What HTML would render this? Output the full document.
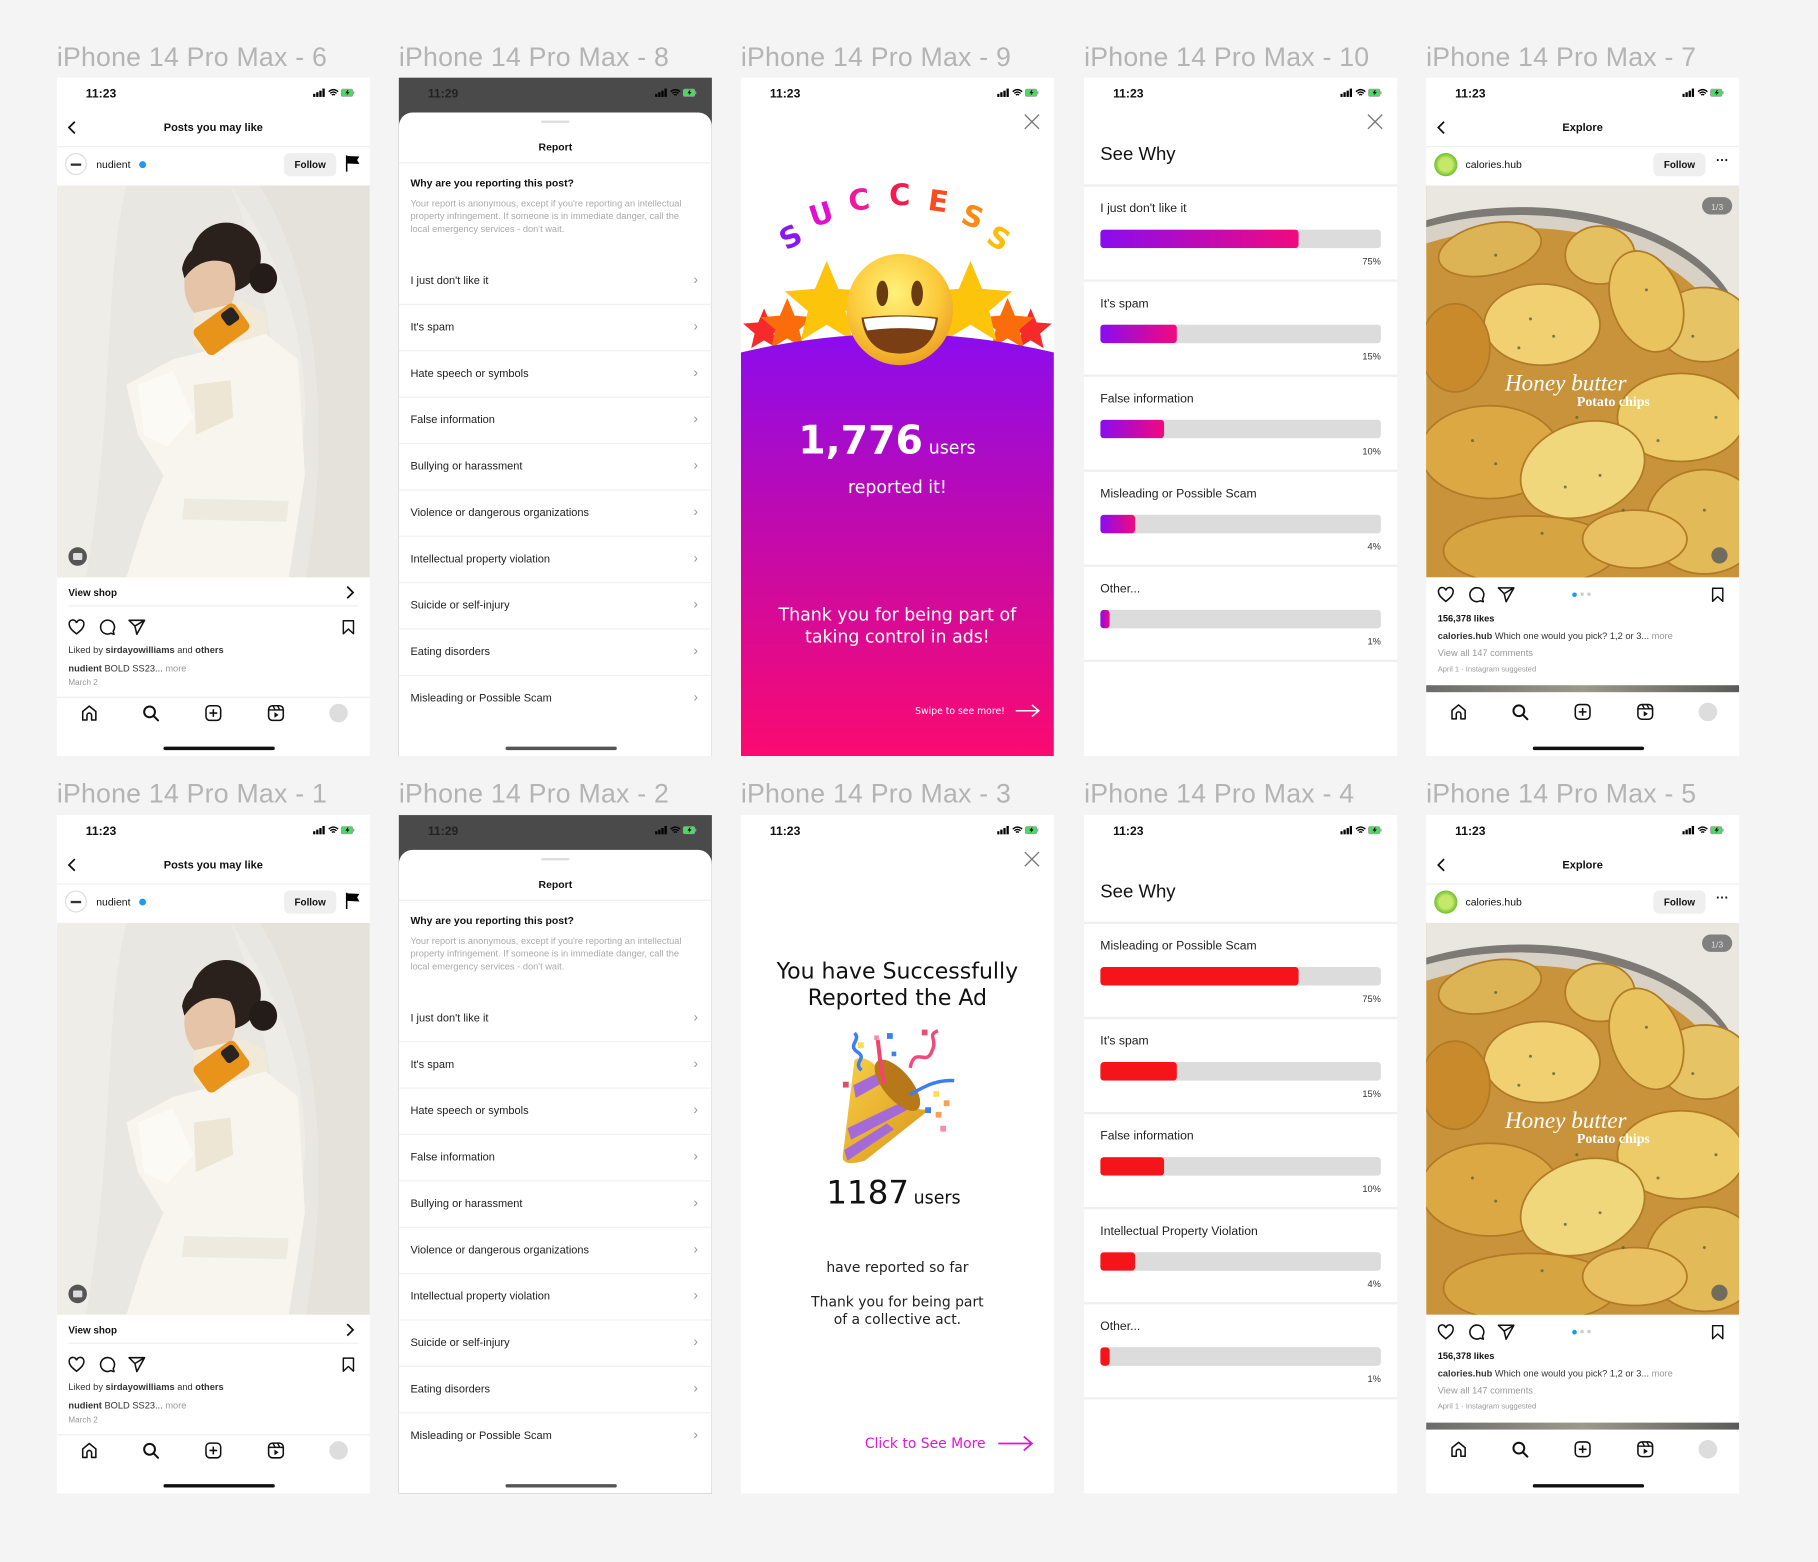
<!DOCTYPE html>
<html><head><meta charset="utf-8">
<style>
*{margin:0;padding:0;box-sizing:border-box}
html,body{width:1818px;height:1562px;overflow:hidden;background:#f4f4f4}
body{font-family:"Liberation Sans",Arial,sans-serif;color:#111}
#w{position:absolute;left:0;top:0;width:1568px;height:1347px;transform:scale(1.15944);transform-origin:0 0}
.lbl{position:absolute;font-size:23px;color:#b4b4b4;white-space:nowrap;letter-spacing:.2px}
.ph{position:absolute;width:270px;height:585px;background:#fff;overflow:hidden}
.a{position:absolute;white-space:nowrap}
.st{left:25px;top:8px;font-size:10.5px;font-weight:bold}
.sti{right:13px;top:8px}
.hb{position:absolute;left:92px;width:96px;height:3px;border-radius:2px;background:#111;top:577px}
.hl{position:absolute;left:0;right:0;height:1px;background:#efefef}
.b9{font-size:9px;font-weight:bold}
.t8{font-size:8px}
.fol{position:absolute;left:196px;top:65px;width:45px;height:20px;border-radius:5px;background:#efefef;font-size:8.5px;font-weight:bold;text-align:center;line-height:20px}
.item{position:absolute;left:10px;font-size:9.5px;color:#222}
.chev{position:absolute;right:12px;font-size:12px;color:#999}
.bar{position:absolute;left:14px;width:242px;height:16px;border-radius:3px;background:#dcdcdc;overflow:hidden}
.bar i{position:absolute;left:0;top:0;bottom:0;border-radius:3px}
.g i{background:linear-gradient(90deg,#8a0cef,#f2097e)}
.r i{background:#f5141a}
.pl{position:absolute;left:14px;font-size:10.5px;color:#222}
.pc{position:absolute;right:14px;font-size:8px;color:#333}
.para{position:absolute;left:10px;top:103px;font-size:8px;line-height:11px;color:#aaa;white-space:normal;width:236px}
</style></head><body>
<svg width="0" height="0" style="position:absolute">
<defs>
<symbol id="sig" viewBox="0 0 40 10"><rect x="0" y="6" width="2.2" height="3" fill="#000"/><rect x="3" y="4.5" width="2.2" height="4.5" fill="#000"/><rect x="6" y="3" width="2.2" height="6" fill="#000"/><rect x="9" y="1" width="2.2" height="8" fill="#000"/><path d="M15 4 Q19.5 0 24 4 M16.5 5.6 Q19.5 3 22.5 5.6 M18 7.2 Q19.5 6 21 7.2" stroke="#000" stroke-width="1.3" fill="none"/><rect x="27" y="1.5" width="11" height="7" rx="1.5" fill="#4cd964" stroke="#999" stroke-width=".6"/><rect x="38.3" y="3.6" width="1.2" height="2.8" fill="#999"/><path d="M33 2.5 L31 5.5 L33 5.5 L32 7.8 L35 4.3 L33 4.3 L34 2.5Z" fill="#000"/></symbol>
<symbol id="heart" viewBox="0 0 24 24"><path d="M12 20.5 C5 15 2.5 12 2.5 8.3 A4.8 4.8 0 0 1 12 6.5 A4.8 4.8 0 0 1 21.5 8.3 C21.5 12 19 15 12 20.5Z" fill="none" stroke="#111" stroke-width="2"/></symbol>
<symbol id="cmt" viewBox="0 0 24 24"><path d="M20.5 17 A9 9 0 1 0 17.5 19.7 L21.5 21 Z" fill="none" stroke="#111" stroke-width="2" stroke-linejoin="round"/></symbol>
<symbol id="send" viewBox="0 0 24 24"><path d="M22 3 L2 3 L9.5 10.5 L12 21 Z M9.5 10.5 L22 3" fill="none" stroke="#111" stroke-width="2" stroke-linejoin="round"/></symbol>
<symbol id="bm" viewBox="0 0 24 24"><path d="M5 3 H19 V21 L12 14.5 L5 21 Z" fill="none" stroke="#111" stroke-width="2" stroke-linejoin="round"/></symbol>
<symbol id="home" viewBox="0 0 24 24"><path d="M3.5 10 L12 3 L20.5 10 V21 H15 V15 A3 3 0 0 0 9 15 V21 H3.5 Z" fill="none" stroke="#111" stroke-width="2" stroke-linejoin="round"/></symbol>
<symbol id="srch" viewBox="0 0 24 24"><circle cx="10.5" cy="10.5" r="7" fill="none" stroke="#111" stroke-width="2.6"/><path d="M16 16 L21.5 21.5" stroke="#111" stroke-width="2.6" stroke-linecap="round"/></symbol>
<symbol id="plus" viewBox="0 0 24 24"><rect x="2.5" y="2.5" width="19" height="19" rx="5" fill="none" stroke="#111" stroke-width="2"/><path d="M12 7 V17 M7 12 H17" stroke="#111" stroke-width="2"/></symbol>
<symbol id="reel" viewBox="0 0 24 24"><rect x="2.5" y="2.5" width="19" height="19" rx="5" fill="none" stroke="#111" stroke-width="2"/><path d="M2.5 8 H21.5 M8 2.5 L11 8 M14 2.5 L17 8" stroke="#111" stroke-width="1.8"/><path d="M10 11 L15.5 14.5 L10 18 Z" fill="#111"/></symbol>
<symbol id="chl" viewBox="0 0 12 16"><path d="M9 2 L3 8 L9 14" fill="none" stroke="#111" stroke-width="1.8"/></symbol>
<symbol id="chr" viewBox="0 0 12 16"><path d="M3 2 L9 8 L3 14" fill="none" stroke="#111" stroke-width="1.8"/></symbol>
<symbol id="x" viewBox="0 0 16 16"><path d="M1 1 L15 15 M15 1 L1 15" stroke="#777" stroke-width="1.3"/></symbol>
<path id="star" d="M0,-1 L.265,-.364 L.951,-.309 L.428,.139 L.588,.809 L0,.45 L-.588,.809 L-.428,.139 L-.951,-.309 L-.265,-.364Z"/>
<symbol id="woman" viewBox="0 0 270 338">
<rect width="270" height="338" fill="#e9e7e1"/>
<path d="M0 0 H60 C40 80 50 200 25 338 H0Z" fill="#efede8"/>
<path d="M175 0 H270 V338 H215 C235 220 230 90 175 0Z" fill="#e4e2db"/>
<path d="M150 0 C190 60 215 120 214 200 L200 338 H180 C200 220 190 100 150 0Z" fill="#eeece6"/>
<ellipse cx="146" cy="62" rx="30" ry="30" fill="#2a211d"/>
<ellipse cx="178" cy="80" rx="12" ry="13" fill="#241c18"/>
<ellipse cx="132" cy="86" rx="22" ry="30" fill="#e6c4a8"/>
<path d="M108 72 C112 45 150 40 168 62 L162 78 C150 62 125 58 110 80Z" fill="#2a211d"/>
<path d="M118 110 L160 100 L180 110 L182 134 L140 152 L118 137Z" fill="#f1ead9"/>
<path d="M60 172 L100 150 L140 140 L180 128 L208 150 L214 250 L200 338 H60 L75 290 L92 250 L70 215Z" fill="#f7f5ee"/>
<path d="M70 172 L100 160 L118 200 L95 225 L75 215Z" fill="#fbfaf5"/>
<path d="M118 172 L150 168 L152 200 L120 215Z" fill="#ede6d4"/>
<path d="M110 270 L200 272 L198 290 L108 288Z" fill="#eeeae0"/>
<g transform="translate(142,124) rotate(-36)"><rect x="-22" y="-14" width="44" height="28" rx="5" fill="#e8941a"/><rect x="6" y="-11" width="13" height="13" rx="3" fill="#2a2420"/></g>
<circle cx="18" cy="320" r="8" fill="#555"/><rect x="14" y="317" width="8" height="6" rx="1" fill="#ddd"/>
</symbol>
<symbol id="chips" viewBox="0 0 270 338">
<rect width="270" height="338" fill="#c8933a"/>
<path d="M0 0 H270 V120 C240 40 120 0 0 40Z" fill="#eae7e1"/>
<path d="M0 30 C100 0 240 30 270 110 V140 C230 50 110 15 0 50Z" fill="#d8d2c6"/>
<path d="M0 30 C100 0 240 30 270 110 L270 116 C235 36 100 8 0 36Z" fill="#7d7a75"/>
<g stroke="#b07a26" stroke-width="1.5">
<ellipse cx="55" cy="55" rx="45" ry="22" fill="#dcb456" transform="rotate(-12 55 55)"/>
<ellipse cx="150" cy="60" rx="30" ry="25" fill="#e4c060"/>
<ellipse cx="240" cy="120" rx="40" ry="32" fill="#e6c466"/>
<ellipse cx="100" cy="120" rx="50" ry="35" fill="#f0d070"/>
<ellipse cx="190" cy="100" rx="30" ry="45" fill="#e9c45e" transform="rotate(-20 190 100)"/>
<ellipse cx="25" cy="140" rx="30" ry="38" fill="#c98a2c"/>
<ellipse cx="220" cy="200" rx="55" ry="38" fill="#eccb68"/>
<ellipse cx="55" cy="230" rx="60" ry="40" fill="#dca843"/>
<ellipse cx="135" cy="245" rx="55" ry="40" fill="#f1d77c" transform="rotate(-20 135 245)"/>
<ellipse cx="240" cy="290" rx="50" ry="45" fill="#e2bb58"/>
<ellipse cx="90" cy="315" rx="75" ry="30" fill="#d7a442"/>
<ellipse cx="180" cy="305" rx="45" ry="25" fill="#e8c062"/>
</g>
<g fill="#5d6535" opacity=".8"><circle cx="90" cy="115" r="1.3"/><circle cx="110" cy="130" r="1.3"/><circle cx="80" cy="140" r="1.3"/><circle cx="130" cy="200" r="1.3"/><circle cx="200" cy="220" r="1.3"/><circle cx="60" cy="240" r="1.3"/><circle cx="40" cy="220" r="1.3"/><circle cx="230" cy="130" r="1.3"/><circle cx="170" cy="280" r="1.3"/><circle cx="150" cy="250" r="1.3"/><circle cx="240" cy="280" r="1.3"/><circle cx="250" cy="200" r="1.3"/><circle cx="100" cy="300" r="1.3"/><circle cx="60" cy="60" r="1.3"/><circle cx="190" cy="90" r="1.3"/><circle cx="120" cy="260" r="1.3"/></g>
<text x="68" y="177" font-family="Liberation Serif" font-style="italic" font-size="20" fill="#fff">Honey butter</text>
<text x="130" y="190" font-family="Liberation Serif" font-weight="bold" font-size="12" fill="#fff">Potato chips</text>
<rect x="238" y="10" width="26" height="15" rx="7.5" fill="#6d6d6d" opacity=".85"/>
<text x="251" y="21" font-size="7.5" fill="#ddd" text-anchor="middle" font-family="Liberation Sans">1/3</text>
<circle cx="253" cy="319" r="7" fill="#5e5e5e" opacity=".85"/>
</symbol>
</defs></svg>
<div id="w">

<div class="lbl" style="left:49px;top:36px">iPhone 14 Pro Max - 6</div>
<div class="lbl" style="left:344px;top:36px">iPhone 14 Pro Max - 8</div>
<div class="lbl" style="left:639px;top:36px">iPhone 14 Pro Max - 9</div>
<div class="lbl" style="left:935px;top:36px">iPhone 14 Pro Max - 10</div>
<div class="lbl" style="left:1230px;top:36px">iPhone 14 Pro Max - 7</div>
<div class="lbl" style="left:49px;top:671px">iPhone 14 Pro Max - 1</div>
<div class="lbl" style="left:344px;top:671px">iPhone 14 Pro Max - 2</div>
<div class="lbl" style="left:639px;top:671px">iPhone 14 Pro Max - 3</div>
<div class="lbl" style="left:935px;top:671px">iPhone 14 Pro Max - 4</div>
<div class="lbl" style="left:1230px;top:671px">iPhone 14 Pro Max - 5</div>

<!-- Posts (6) -->
<div class="ph" style="left:49px;top:67px">
<div class="a st">11:23</div><svg class="a sti" width="36" height="10"><use href="#sig"/></svg>
<svg class="a" style="left:8px;top:36px" width="10" height="14"><use href="#chl"/></svg>
<div class="a b9" style="left:0;width:270px;text-align:center;top:38px;font-size:9.5px">Posts you may like</div>
<div class="hl" style="top:59px"></div>
<div class="a" style="left:7px;top:65px;width:19px;height:19px;border-radius:50%;border:1px solid #ddd;background:#fff"><div style="margin:8px 4px;height:2px;background:#333"></div></div>
<div class="a" style="left:34px;top:70px;font-size:9px">nudient</div>
<div class="a" style="left:71px;top:72px;width:6px;height:6px;border-radius:50%;background:#1d9bf0"></div>
<div class="fol">Follow</div>
<svg class="a" style="left:248px;top:66px" width="14" height="16"><path d="M2 1 V15" stroke="#000" stroke-width="1.3"/><path d="M2.5 1.5 L13 2 L11 5 L13 8.5 L2.5 8Z" fill="#000"/></svg>
<svg class="a" style="left:0;top:93px" width="270" height="338"><use href="#woman"/></svg>
<div class="a b9" style="left:10px;top:439px;font-size:8.5px">View shop</div>
<svg class="a" style="left:248px;top:437px" width="10" height="14"><use href="#chr"/></svg>
<div class="hl" style="left:10px;right:10px;top:455px"></div>
<svg class="a" style="left:9px;top:466px" width="16" height="16"><use href="#heart"/></svg>
<svg class="a" style="left:35px;top:466px" width="16" height="16"><use href="#cmt"/></svg>
<svg class="a" style="left:61px;top:466px" width="16" height="16"><use href="#send"/></svg>
<svg class="a" style="left:244px;top:466px" width="15" height="16"><use href="#bm"/></svg>
<div class="a t8" style="left:10px;top:489px;color:#333">Liked by <b>sirdayowilliams</b> and <b>others</b></div>
<div class="a t8" style="left:10px;top:505px;color:#333"><b>nudient</b> BOLD SS23... <span style="color:#999">more</span></div>
<div class="a" style="left:10px;top:519px;font-size:7px;color:#999">March 2</div>
<div class="hl" style="top:534px"></div>
<svg class="a" style="left:20px;top:540px" width="16" height="16"><use href="#home"/></svg>
<svg class="a" style="left:73px;top:540px" width="16" height="16"><use href="#srch"/></svg>
<svg class="a" style="left:127px;top:540px" width="16" height="16"><use href="#plus"/></svg>
<svg class="a" style="left:181px;top:540px" width="16" height="16"><use href="#reel"/></svg>
<div class="a" style="left:235px;top:540px;width:16px;height:16px;border-radius:50%;background:#ddd"></div>
<div class="hb"></div>
</div>

<!-- Posts (1) -->
<div class="ph" style="left:49px;top:703px">
<div class="a st">11:23</div><svg class="a sti" width="36" height="10"><use href="#sig"/></svg>
<svg class="a" style="left:8px;top:36px" width="10" height="14"><use href="#chl"/></svg>
<div class="a b9" style="left:0;width:270px;text-align:center;top:38px;font-size:9.5px">Posts you may like</div>
<div class="hl" style="top:59px"></div>
<div class="a" style="left:7px;top:65px;width:19px;height:19px;border-radius:50%;border:1px solid #ddd;background:#fff"><div style="margin:8px 4px;height:2px;background:#333"></div></div>
<div class="a" style="left:34px;top:70px;font-size:9px">nudient</div>
<div class="a" style="left:71px;top:72px;width:6px;height:6px;border-radius:50%;background:#1d9bf0"></div>
<div class="fol">Follow</div>
<svg class="a" style="left:248px;top:66px" width="14" height="16"><path d="M2 1 V15" stroke="#000" stroke-width="1.3"/><path d="M2.5 1.5 L13 2 L11 5 L13 8.5 L2.5 8Z" fill="#000"/></svg>
<svg class="a" style="left:0;top:93px" width="270" height="338"><use href="#woman"/></svg>
<div class="a b9" style="left:10px;top:439px;font-size:8.5px">View shop</div>
<svg class="a" style="left:248px;top:437px" width="10" height="14"><use href="#chr"/></svg>
<div class="hl" style="left:10px;right:10px;top:455px"></div>
<svg class="a" style="left:9px;top:466px" width="16" height="16"><use href="#heart"/></svg>
<svg class="a" style="left:35px;top:466px" width="16" height="16"><use href="#cmt"/></svg>
<svg class="a" style="left:61px;top:466px" width="16" height="16"><use href="#send"/></svg>
<svg class="a" style="left:244px;top:466px" width="15" height="16"><use href="#bm"/></svg>
<div class="a t8" style="left:10px;top:489px;color:#333">Liked by <b>sirdayowilliams</b> and <b>others</b></div>
<div class="a t8" style="left:10px;top:505px;color:#333"><b>nudient</b> BOLD SS23... <span style="color:#999">more</span></div>
<div class="a" style="left:10px;top:519px;font-size:7px;color:#999">March 2</div>
<div class="hl" style="top:534px"></div>
<svg class="a" style="left:20px;top:540px" width="16" height="16"><use href="#home"/></svg>
<svg class="a" style="left:73px;top:540px" width="16" height="16"><use href="#srch"/></svg>
<svg class="a" style="left:127px;top:540px" width="16" height="16"><use href="#plus"/></svg>
<svg class="a" style="left:181px;top:540px" width="16" height="16"><use href="#reel"/></svg>
<div class="a" style="left:235px;top:540px;width:16px;height:16px;border-radius:50%;background:#ddd"></div>
<div class="hb"></div>
</div>

<!-- Report (8) -->
<div class="ph" style="left:344px;top:67px;background:#4a4a4a">
<div class="a st" style="color:#222">11:29</div><svg class="a sti" width="36" height="10"><use href="#sig"/></svg>
<div class="a" style="left:0;top:30px;width:270px;height:555px;background:#fff;border-radius:12px 12px 0 0"></div>
<div class="a" style="left:123px;top:37px;width:24px;height:2px;background:#ddd"></div>
<div class="a b9" style="left:0;width:270px;text-align:center;top:55px">Report</div>
<div class="hl" style="top:73px"></div>
<div class="a b9" style="left:10px;top:86px">Why are you reporting this post?</div>
<div class="para">Your report is anonymous, except if you're reporting an intellectual property infringement. If someone is in immediate danger, call the local emergency services - don't wait.</div>
<div class="item" style="top:170px">I just don't like it</div><div class="chev" style="top:167px">›</div><div class="hl" style="top:195px"></div>
<div class="item" style="top:210px">It's spam</div><div class="chev" style="top:207px">›</div><div class="hl" style="top:235px"></div>
<div class="item" style="top:250px">Hate speech or symbols</div><div class="chev" style="top:247px">›</div><div class="hl" style="top:275px"></div>
<div class="item" style="top:290px">False information</div><div class="chev" style="top:287px">›</div><div class="hl" style="top:315px"></div>
<div class="item" style="top:330px">Bullying or harassment</div><div class="chev" style="top:327px">›</div><div class="hl" style="top:355px"></div>
<div class="item" style="top:370px">Violence or dangerous organizations</div><div class="chev" style="top:367px">›</div><div class="hl" style="top:395px"></div>
<div class="item" style="top:410px">Intellectual property violation</div><div class="chev" style="top:407px">›</div><div class="hl" style="top:435px"></div>
<div class="item" style="top:450px">Suicide or self-injury</div><div class="chev" style="top:447px">›</div><div class="hl" style="top:475px"></div>
<div class="item" style="top:490px">Eating disorders</div><div class="chev" style="top:487px">›</div><div class="hl" style="top:515px"></div>
<div class="item" style="top:530px">Misleading or Possible Scam</div><div class="chev" style="top:527px">›</div>
<div class="hb" style="background:#555"></div>
</div>

<!-- Report (2) -->
<div class="ph" style="left:344px;top:703px;background:#4a4a4a">
<div class="a st" style="color:#222">11:29</div><svg class="a sti" width="36" height="10"><use href="#sig"/></svg>
<div class="a" style="left:0;top:30px;width:270px;height:555px;background:#fff;border-radius:12px 12px 0 0"></div>
<div class="a" style="left:123px;top:37px;width:24px;height:2px;background:#ddd"></div>
<div class="a b9" style="left:0;width:270px;text-align:center;top:55px">Report</div>
<div class="hl" style="top:73px"></div>
<div class="a b9" style="left:10px;top:86px">Why are you reporting this post?</div>
<div class="para">Your report is anonymous, except if you're reporting an intellectual property infringement. If someone is in immediate danger, call the local emergency services - don't wait.</div>
<div class="item" style="top:170px">I just don't like it</div><div class="chev" style="top:167px">›</div><div class="hl" style="top:195px"></div>
<div class="item" style="top:210px">It's spam</div><div class="chev" style="top:207px">›</div><div class="hl" style="top:235px"></div>
<div class="item" style="top:250px">Hate speech or symbols</div><div class="chev" style="top:247px">›</div><div class="hl" style="top:275px"></div>
<div class="item" style="top:290px">False information</div><div class="chev" style="top:287px">›</div><div class="hl" style="top:315px"></div>
<div class="item" style="top:330px">Bullying or harassment</div><div class="chev" style="top:327px">›</div><div class="hl" style="top:355px"></div>
<div class="item" style="top:370px">Violence or dangerous organizations</div><div class="chev" style="top:367px">›</div><div class="hl" style="top:395px"></div>
<div class="item" style="top:410px">Intellectual property violation</div><div class="chev" style="top:407px">›</div><div class="hl" style="top:435px"></div>
<div class="item" style="top:450px">Suicide or self-injury</div><div class="chev" style="top:447px">›</div><div class="hl" style="top:475px"></div>
<div class="item" style="top:490px">Eating disorders</div><div class="chev" style="top:487px">›</div><div class="hl" style="top:515px"></div>
<div class="item" style="top:530px">Misleading or Possible Scam</div><div class="chev" style="top:527px">›</div>
<div class="hb" style="background:#555"></div>
</div>

<!-- Success (9) -->
<div class="ph" style="left:639px;top:67px">
<div class="a st">11:23</div><svg class="a sti" width="36" height="10"><use href="#sig"/></svg>
<svg class="a" style="left:244px;top:31px" width="14" height="14"><use href="#x"/></svg>
<svg class="a" style="left:0;top:0" width="270" height="585">
<defs><linearGradient id="pg" x1="0" y1="0" x2="0" y2="1"><stop offset="0" stop-color="#8b0cee"/><stop offset=".45" stop-color="#c00aae"/><stop offset="1" stop-color="#fb0a70"/></linearGradient></defs>
<g font-family="DejaVu Sans, Liberation Sans" font-weight="bold" font-size="25" text-anchor="middle">
<text x="47" y="145" fill="#8a16f2" transform="rotate(-28 47 145)">S</text>
<text x="72" y="126" fill="#e20fd2" transform="rotate(-18 72 126)">U</text>
<text x="103" y="114" fill="#f0189c" transform="rotate(-7 103 114)">C</text>
<text x="137" y="110" fill="#f51a50">C</text>
<text x="169" y="115" fill="#fa4c1e" transform="rotate(8 169 115)">E</text>
<text x="197" y="128" fill="#fa8a10" transform="rotate(20 197 128)">S</text>
<text x="218" y="146" fill="#fbbd0a" transform="rotate(30 218 146)">S</text>
</g>
<use href="#star" fill="#f62a2a" transform="translate(20,218) scale(19)"/>
<use href="#star" fill="#fa6c0c" transform="translate(40,214) scale(24)"/>
<use href="#star" fill="#fcc40a" transform="translate(74,196) scale(38)"/>
<use href="#star" fill="#f62a2a" transform="translate(250,218) scale(19)"/>
<use href="#star" fill="#fa6c0c" transform="translate(230,214) scale(24)"/>
<use href="#star" fill="#fcc40a" transform="translate(198,196) scale(38)"/>
<path d="M0 237 Q135 205 270 237 V585 H0Z" fill="url(#pg)"/>
<defs><radialGradient id="fy" cx=".45" cy=".35" r=".7"><stop offset="0" stop-color="#fff27a"/><stop offset=".6" stop-color="#fcc93a"/><stop offset="1" stop-color="#e89a20"/></radialGradient></defs>
<ellipse cx="137" cy="200" rx="46" ry="48" fill="url(#fy)"/>
<ellipse cx="122" cy="186" rx="5" ry="11" fill="#6a3a10"/>
<ellipse cx="152" cy="186" rx="5" ry="11" fill="#6a3a10"/>
<path d="M104 207 Q137 203 170 207 Q166 238 137 238 Q108 238 104 207Z" fill="#7a3e14"/>
<path d="M106 208 Q137 204 168 208 Q167 216 165 218 Q137 214 109 218 Q107 214 106 208Z" fill="#fff"/>
<text x="157" y="324" font-family="DejaVu Sans, Liberation Sans" font-weight="bold" font-size="34" fill="#fff" text-anchor="end">1,776</text>
<text x="162" y="324" font-family="DejaVu Sans, Liberation Sans" font-size="15" fill="#fff">users</text>
<text x="135" y="358" font-family="DejaVu Sans, Liberation Sans" font-size="15" fill="#fff" text-anchor="middle">reported it!</text>
<text x="135" y="468" font-family="DejaVu Sans, Liberation Sans" font-size="15" fill="#fff" text-anchor="middle">Thank you for being part of</text>
<text x="135" y="487" font-family="DejaVu Sans, Liberation Sans" font-size="15" fill="#fff" text-anchor="middle">taking control in ads!</text>
<text x="189" y="549" font-family="DejaVu Sans, Liberation Sans" font-size="8" fill="#fff" text-anchor="middle">Swipe to see more!</text>
<path d="M237 546 H256 M251 541 L257 546 L251 551" stroke="#fff" stroke-width="1.3" fill="none"/>
</svg>
</div>

<!-- Success (3) -->
<div class="ph" style="left:639px;top:703px">
<div class="a st">11:23</div><svg class="a sti" width="36" height="10"><use href="#sig"/></svg>
<svg class="a" style="left:244px;top:31px" width="14" height="14"><use href="#x"/></svg>
<svg class="a" style="left:0;top:0" width="270" height="585">
<g font-family="DejaVu Sans, Liberation Sans" text-anchor="middle" fill="#111">
<text x="135" y="141" font-size="19">You have Successfully</text>
<text x="135" y="164" font-size="19">Reported the Ad</text>
</g>
<g transform="translate(0,8)">
<defs><linearGradient id="cone" x1="0" y1="0" x2="1" y2="1"><stop offset="0" stop-color="#f7d046"/><stop offset="1" stop-color="#d9931a"/></linearGradient></defs>
<path d="M98 203 Q112 195 135 232 Q150 250 164 245 L107 290 Q86 296 88 285Z" fill="url(#cone)"/>
<path d="M92 262 L140 239 L146 245 L95 272Z M89 281 L126 258 L132 263 L92 290Z M97 225 L119 214 L124 222 L99 236Z" fill="#a46ad8"/>
<ellipse cx="135" cy="225" rx="12" ry="27" transform="rotate(-40 135 225)" fill="#b7781a"/>
<path d="M104 212 C96 205 110 202 100 196 C92 190 104 186 98 180" stroke="#3d7ef2" stroke-width="3" fill="none"/>
<path d="M124 224 C120 210 120 200 118 186" stroke="#f0456e" stroke-width="3.5" fill="none"/>
<path d="M146 233 C160 225 170 220 184 221" stroke="#3d7ef2" stroke-width="3" fill="none"/>
<path d="M146 210 C150 190 160 210 165 195 C170 185 160 182 170 178" stroke="#ef4a7c" stroke-width="3" fill="none"/>
<g><rect x="101" y="188" width="5" height="5" fill="#fbe04a"/><rect x="126" y="180" width="5" height="5" fill="#3d7ef2"/><rect x="130" y="196" width="4" height="4" fill="#3d7ef2"/><rect x="166" y="230" width="5" height="5" fill="#fbe04a"/><rect x="175" y="238" width="5" height="5" fill="#f7a05a"/><rect x="159" y="244" width="5" height="5" fill="#3d7ef2"/><rect x="168" y="248" width="5" height="5" fill="#f7a05a"/><rect x="172" y="260" width="5" height="5" fill="#f78ab0"/><rect x="88" y="222" width="5" height="5" fill="#e84a6a"/><rect x="156" y="177" width="5" height="5" fill="#ef4a7c"/><rect x="115" y="182" width="4" height="4" fill="#f78ab0"/></g>
</g>
<g font-family="DejaVu Sans, Liberation Sans" fill="#111">
<text x="145" y="335" font-size="28" text-anchor="end">1187</text>
<text x="149" y="335" font-size="15">users</text>
<text x="135" y="394" font-size="12" text-anchor="middle" fill="#222">have reported so far</text>
<text x="135" y="424" font-size="12" text-anchor="middle" fill="#222">Thank you for being part</text>
<text x="135" y="439" font-size="12" text-anchor="middle" fill="#222">of a collective act.</text>
<text x="159" y="546" font-size="12" text-anchor="middle" fill="#e215d8">Click to See More</text>
</g>
<path d="M222 542 H250 M244 536 L251 542 L244 548" stroke="#e215d8" stroke-width="1.5" fill="none"/>
</svg>
</div>

<!-- See Why (10) -->
<div class="ph" style="left:935px;top:67px">
<div class="a st">11:23</div><svg class="a sti" width="36" height="10"><use href="#sig"/></svg>
<svg class="a" style="left:244px;top:31px" width="14" height="14"><use href="#x"/></svg>
<div class="a" style="left:14px;top:58px;font-size:16px">See Why</div>
<div class="hl" style="top:92px;height:2px"></div>
<div class="pl" style="top:107px">I just don't like it</div><div class="bar g" style="top:131px"><i style="width:171px"></i></div><div class="pc" style="top:154px">75%</div><div class="hl" style="top:174px;height:2px"></div>
<div class="pl" style="top:189px">It's spam</div><div class="bar g" style="top:213px"><i style="width:66px"></i></div><div class="pc" style="top:236px">15%</div><div class="hl" style="top:256px;height:2px"></div>
<div class="pl" style="top:271px">False information</div><div class="bar g" style="top:295px"><i style="width:55px"></i></div><div class="pc" style="top:318px">10%</div><div class="hl" style="top:338px;height:2px"></div>
<div class="pl" style="top:353px">Misleading or Possible Scam</div><div class="bar g" style="top:377px"><i style="width:30px"></i></div><div class="pc" style="top:400px">4%</div><div class="hl" style="top:420px;height:2px"></div>
<div class="pl" style="top:435px">Other...</div><div class="bar g" style="top:459px"><i style="width:8px"></i></div><div class="pc" style="top:482px">1%</div><div class="hl" style="top:502px;height:2px"></div>
</div>

<!-- See Why (4) -->
<div class="ph" style="left:935px;top:703px">
<div class="a st">11:23</div><svg class="a sti" width="36" height="10"><use href="#sig"/></svg>
<div class="a" style="left:14px;top:58px;font-size:16px">See Why</div>
<div class="hl" style="top:92px;height:2px"></div>
<div class="pl" style="top:107px">Misleading or Possible Scam</div><div class="bar r" style="top:131px"><i style="width:171px"></i></div><div class="pc" style="top:154px">75%</div><div class="hl" style="top:174px;height:2px"></div>
<div class="pl" style="top:189px">It's spam</div><div class="bar r" style="top:213px"><i style="width:66px"></i></div><div class="pc" style="top:236px">15%</div><div class="hl" style="top:256px;height:2px"></div>
<div class="pl" style="top:271px">False information</div><div class="bar r" style="top:295px"><i style="width:55px"></i></div><div class="pc" style="top:318px">10%</div><div class="hl" style="top:338px;height:2px"></div>
<div class="pl" style="top:353px">Intellectual Property Violation</div><div class="bar r" style="top:377px"><i style="width:30px"></i></div><div class="pc" style="top:400px">4%</div><div class="hl" style="top:420px;height:2px"></div>
<div class="pl" style="top:435px">Other...</div><div class="bar r" style="top:459px"><i style="width:8px"></i></div><div class="pc" style="top:482px">1%</div><div class="hl" style="top:502px;height:2px"></div>
</div>

<!-- Explore (7) -->
<div class="ph" style="left:1230px;top:67px">
<div class="a st">11:23</div><svg class="a sti" width="36" height="10"><use href="#sig"/></svg>
<svg class="a" style="left:8px;top:36px" width="10" height="14"><use href="#chl"/></svg>
<div class="a b9" style="left:0;width:270px;text-align:center;top:38px;font-size:9.5px">Explore</div>
<div class="hl" style="top:59px"></div>
<div class="a" style="left:7px;top:65px;width:20px;height:20px;border-radius:50%;background:radial-gradient(circle,#c6e86a 40%,#6cc02a 70%)"></div>
<div class="a" style="left:34px;top:70px;font-size:9px">calories.hub</div>
<div class="fol">Follow</div>
<div class="a" style="left:250px;top:66px;font-size:11px;font-weight:bold">···</div>
<svg class="a" style="left:0;top:93px" width="270" height="338"><use href="#chips"/></svg>
<svg class="a" style="left:9px;top:438px" width="16" height="16"><use href="#heart"/></svg>
<svg class="a" style="left:35px;top:438px" width="16" height="16"><use href="#cmt"/></svg>
<svg class="a" style="left:61px;top:438px" width="16" height="16"><use href="#send"/></svg>
<div class="a" style="left:126px;top:444px;width:4px;height:4px;border-radius:50%;background:#1d9bf0"></div>
<div class="a" style="left:133px;top:444px;width:3px;height:3px;border-radius:50%;background:#ccc"></div>
<div class="a" style="left:139px;top:444px;width:3px;height:3px;border-radius:50%;background:#ccc"></div>
<svg class="a" style="left:244px;top:438px" width="15" height="16"><use href="#bm"/></svg>
<div class="a t8" style="left:10px;top:462px;font-weight:bold">156,378 likes</div>
<div class="a t8" style="left:10px;top:477px;color:#333"><b>calories.hub</b> Which one would you pick? 1,2 or 3... <span style="color:#999">more</span></div>
<div class="a t8" style="left:10px;top:492px;color:#999">View all 147 comments</div>
<div class="a" style="left:10px;top:507px;font-size:6.5px;color:#999">April 1 · Instagram suggested</div>
<div class="a" style="left:0;top:524px;width:270px;height:6px;background:linear-gradient(90deg,#6a6a6a,#9a9a8a,#5a5a5a)"></div>
<svg class="a" style="left:20px;top:539px" width="16" height="16"><use href="#home"/></svg>
<svg class="a" style="left:73px;top:539px" width="16" height="16"><use href="#srch"/></svg>
<svg class="a" style="left:127px;top:539px" width="16" height="16"><use href="#plus"/></svg>
<svg class="a" style="left:181px;top:539px" width="16" height="16"><use href="#reel"/></svg>
<div class="a" style="left:235px;top:539px;width:16px;height:16px;border-radius:50%;background:#ddd"></div>
<div class="hb"></div>
</div>

<!-- Explore (5) -->
<div class="ph" style="left:1230px;top:703px">
<div class="a st">11:23</div><svg class="a sti" width="36" height="10"><use href="#sig"/></svg>
<svg class="a" style="left:8px;top:36px" width="10" height="14"><use href="#chl"/></svg>
<div class="a b9" style="left:0;width:270px;text-align:center;top:38px;font-size:9.5px">Explore</div>
<div class="hl" style="top:59px"></div>
<div class="a" style="left:7px;top:65px;width:20px;height:20px;border-radius:50%;background:radial-gradient(circle,#c6e86a 40%,#6cc02a 70%)"></div>
<div class="a" style="left:34px;top:70px;font-size:9px">calories.hub</div>
<div class="fol">Follow</div>
<div class="a" style="left:250px;top:66px;font-size:11px;font-weight:bold">···</div>
<svg class="a" style="left:0;top:93px" width="270" height="338"><use href="#chips"/></svg>
<svg class="a" style="left:9px;top:438px" width="16" height="16"><use href="#heart"/></svg>
<svg class="a" style="left:35px;top:438px" width="16" height="16"><use href="#cmt"/></svg>
<svg class="a" style="left:61px;top:438px" width="16" height="16"><use href="#send"/></svg>
<div class="a" style="left:126px;top:444px;width:4px;height:4px;border-radius:50%;background:#1d9bf0"></div>
<div class="a" style="left:133px;top:444px;width:3px;height:3px;border-radius:50%;background:#ccc"></div>
<div class="a" style="left:139px;top:444px;width:3px;height:3px;border-radius:50%;background:#ccc"></div>
<svg class="a" style="left:244px;top:438px" width="15" height="16"><use href="#bm"/></svg>
<div class="a t8" style="left:10px;top:462px;font-weight:bold">156,378 likes</div>
<div class="a t8" style="left:10px;top:477px;color:#333"><b>calories.hub</b> Which one would you pick? 1,2 or 3... <span style="color:#999">more</span></div>
<div class="a t8" style="left:10px;top:492px;color:#999">View all 147 comments</div>
<div class="a" style="left:10px;top:507px;font-size:6.5px;color:#999">April 1 · Instagram suggested</div>
<div class="a" style="left:0;top:524px;width:270px;height:6px;background:linear-gradient(90deg,#6a6a6a,#9a9a8a,#5a5a5a)"></div>
<svg class="a" style="left:20px;top:539px" width="16" height="16"><use href="#home"/></svg>
<svg class="a" style="left:73px;top:539px" width="16" height="16"><use href="#srch"/></svg>
<svg class="a" style="left:127px;top:539px" width="16" height="16"><use href="#plus"/></svg>
<svg class="a" style="left:181px;top:539px" width="16" height="16"><use href="#reel"/></svg>
<div class="a" style="left:235px;top:539px;width:16px;height:16px;border-radius:50%;background:#ddd"></div>
<div class="hb"></div>
</div>

</div>
</body></html>
